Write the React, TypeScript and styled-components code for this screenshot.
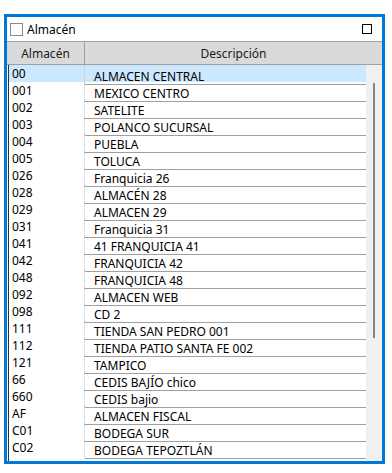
import { createGlobalStyle, styled } from "styled-components";

const rows: [string, string][] = [
  ["00", "ALMACEN CENTRAL"],
  ["001", "MEXICO CENTRO"],
  ["002", "SATELITE"],
  ["003", "POLANCO SUCURSAL"],
  ["004", "PUEBLA"],
  ["005", "TOLUCA"],
  ["026", "Franquicia 26"],
  ["028", "ALMACÉN 28"],
  ["029", "ALMACEN 29"],
  ["031", "Franquicia 31"],
  ["041", "41 FRANQUICIA 41"],
  ["042", "FRANQUICIA 42"],
  ["048", "FRANQUICIA 48"],
  ["092", "ALMACEN WEB"],
  ["098", "CD 2"],
  ["111", "TIENDA SAN PEDRO 001"],
  ["112", "TIENDA PATIO SANTA FE 002"],
  ["121", "TAMPICO"],
  ["66", "CEDIS BAJÍO chico"],
  ["660", "CEDIS bajio"],
  ["AF", "ALMACEN FISCAL"],
  ["C01", "BODEGA SUR"],
  ["C02", "BODEGA TEPOZTLÁN"],
];

export default function App() {
  return (
    <>
      <GlobalStyle />
      <Frame>
        <TitleBar>
          <CheckBox />
          <Title>Almacén</Title>
          <MaxBox />
        </TitleBar>
        <Header>
          <HeaderCell $divider>Almacén</HeaderCell>
          <HeaderCell>Descripción</HeaderCell>
        </Header>
        <Body>
          <List>
            {rows.map(([code, desc], i) => (
              <Row key={code} $selected={i === 0}>
                <CodeCell>{code}</CodeCell>
                <DescCell>{desc}</DescCell>
              </Row>
            ))}
          </List>
          <ScrollBar>
            <Thumb />
          </ScrollBar>
        </Body>
      </Frame>
    </>
  );
}

const GlobalStyle = createGlobalStyle`
  body {
    margin: 0;
    background: #ffffff;
    font-family: "Noto Sans", "Open Sans", sans-serif;
    font-size: 12px;
    color: #000000;
  }
`;

const Frame = styled.div`
  box-sizing: border-box;
  margin: 14px 0 0 4px;
  width: 381px;
  height: 450px;
  border: 3px solid #0078d7;
  background: #ffffff;
  display: flex;
  flex-direction: column;
  overflow: hidden;
`;

const TitleBar = styled.div`
  height: 24px;
  display: flex;
  align-items: center;
  padding-left: 3px;
  padding-right: 10px;
`;

const CheckBox = styled.span`
  box-sizing: border-box;
  width: 13px;
  height: 13px;
  border: 1px solid #8a8a8a;
  background: #fdfdff;
  margin-right: 4px;
`;

const Title = styled.span`
  flex: 1;
  font-size: 12px;
`;

const MaxBox = styled.span`
  box-sizing: border-box;
  width: 10px;
  height: 10px;
  border: 1px solid #000000;
  margin-top: -1px;
`;

const Header = styled.div`
  display: grid;
  grid-template-columns: 78px 1fr;
  height: 22px;
  background: #dadada;
  border-top: 1px solid #a0a0a0;
  border-bottom: 1px solid #a0a0a0;
`;

const HeaderCell = styled.div<{ $divider?: boolean }>`
  display: flex;
  align-items: center;
  justify-content: center;
  color: #1a1a1a;
  border-right: ${(p) => (p.$divider ? "1px solid #a0a0a0" : "none")};
`;

const Body = styled.div`
  flex: 1;
  display: flex;
  min-height: 0;
`;

const List = styled.div`
  flex: 1;
  overflow: hidden;
  border-left: 1px solid #303030;
  margin-left: 1px;
`;

const Row = styled.div<{ $selected?: boolean }>`
  display: grid;
  grid-template-columns: 76px 1fr;
  height: 17px;
  background: ${(p) => (p.$selected ? "#cce8ff" : "#ffffff")};
`;

const CodeCell = styled.div`
  padding: 1px 0 0 3px;
  line-height: 15px;
  border-right: 1px dotted #c4c4c4;
  white-space: nowrap;
`;

const DescCell = styled.div`
  box-sizing: border-box;
  padding: 4px 0 0 9px;
  line-height: 15px;
  border-bottom: 1px solid #a0a0a0;
  white-space: nowrap;
  overflow: visible;
`;

const ScrollBar = styled.div`
  width: 16px;
  background: #f0f0f0;
`;

const Thumb = styled.div`
  width: 2px;
  height: 255px;
  margin: 18px 0 0 7px;
  background: #858585;
`;
